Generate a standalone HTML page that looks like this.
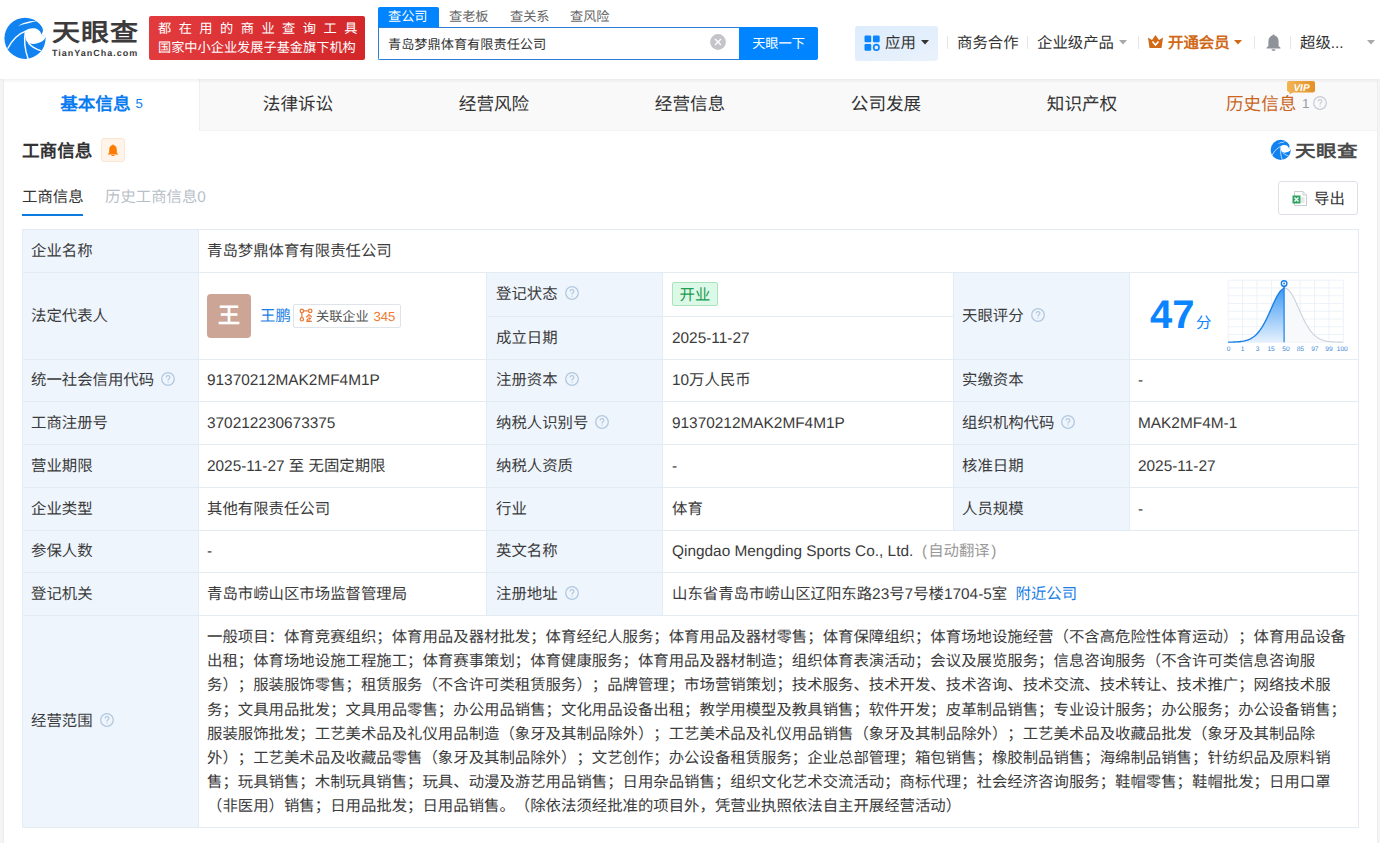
<!DOCTYPE html>
<html lang="zh-CN"><head><meta charset="utf-8">
<style>
*{margin:0;padding:0;box-sizing:border-box}
html,body{text-rendering:geometricPrecision;width:1380px;height:843px;overflow:hidden;background:#f4f4f4;font-family:"Liberation Sans",sans-serif;color:#333}
.a{position:absolute;white-space:nowrap}
#hdr{position:absolute;left:0;top:0;width:1380px;height:79px;background:#fff;box-shadow:0 1px 2px rgba(0,0,0,0.05)}
#card{position:absolute;left:4px;top:79px;width:1373px;height:770px;background:#fff;box-shadow:-1px 0 0 #ebebeb,1px 0 0 #eeeeee}
.tabs{position:absolute;left:0;top:0;width:1373px;height:52px;background:#f9f9f9;border-bottom:1px solid #f3f3f3}
.tab{position:absolute;top:0;width:196px;height:52px;line-height:50px;text-align:center;font-size:17.6px;color:#333}
.tab.on{background:#fff;color:#0a7cf0;font-weight:bold}
.cell{position:absolute;border-right:1px solid #e4ebf3;border-bottom:1px solid #e4ebf3;font-size:15.4px;color:#333;padding-left:10px;display:flex;align-items:center;white-space:nowrap}
.lb{background:#eef5fd}
.t{position:absolute;margin-top:1px;white-space:nowrap;font-size:15.4px;color:#3b3b3b;text-spacing-trim:space-all}
.q{display:inline-block;width:14px;height:14px;margin-left:7px;vertical-align:-1.4px}
</style></head><body>
<div id="hdr">
  <!-- logo -->
  <svg class="a" style="left:3px;top:16px" width="45" height="45" viewBox="0 0 45 45"><circle cx="22" cy="22.3" r="20.6" fill="#1183f0"/>
<path d="M33.1 5.1C37 7.2 39.8 10.5 39.9 14.2C40 16 39.4 17.3 38.4 18.3L42.8 21.1L46 21L46 -1L30 -1Z" fill="#fff"/>
<path d="M38.4 18.3C37 14 34 12.2 30 12.2C26.5 12.2 24 13.2 22.4 15C21.8 19 22 23.5 24.3 26.3C27 28.3 31 28.3 34.5 27.3C38.5 26.2 41.5 24.5 42.8 21.1Z" fill="#fff"/>
<path d="M15.3 9.9C19 7 25.5 4.9 33.6 5C27.5 6.9 21 8 15.3 9.9Z" fill="#fff"/>
<path d="M4.6 32.8C9 24 15.5 17.5 23.8 14.6" stroke="#fff" stroke-width="1.4" fill="none"/>
<path d="M22.4 15.5C20.8 24 21.8 34 25.3 43.5" stroke="#fff" stroke-width="1.4" fill="none"/>
<path d="M25.4 27C28.5 30.5 32.5 33.2 37.8 34.6" stroke="#fff" stroke-width="1.4" fill="none"/></svg>
  <div class="a" style="left:52px;top:18px;font-size:28px;line-height:34px;font-weight:bold;color:#3c3a3b;letter-spacing:1px;transform:scaleY(0.875);transform-origin:0 0">天眼查</div>
  <div class="a" style="left:52px;top:46px;font-size:9px;line-height:14px;font-weight:bold;color:#3c3a3b;letter-spacing:1px">TianYanCha.com</div>
  <!-- red badge -->
  <div class="a" style="left:149px;top:16px;width:216px;height:44px;border-radius:2px;background:linear-gradient(90deg,#e23b3e,#d3272a)"></div>
  <div class="a" style="left:158px;top:18px;font-size:13.2px;color:#fff;letter-spacing:7.5px;font-weight:500">都在用的商业查询工具</div>
  <div class="a" style="left:158px;top:37px;font-size:13.2px;color:#fff">国家中小企业发展子基金旗下机构</div>
  <!-- search -->
  <div class="a" style="left:378px;top:7px;width:61px;height:21px;background:#0084ff;border-radius:2px 2px 0 0"></div>
  <div class="a" style="left:388px;top:7px;font-size:13.2px;line-height:20px;color:#fff;font-weight:500">查公司</div>
  <div class="a" style="left:449px;top:7px;font-size:13.2px;line-height:20px;color:#666">查老板</div>
  <div class="a" style="left:510px;top:7px;font-size:13.2px;line-height:20px;color:#666">查关系</div>
  <div class="a" style="left:570px;top:7px;font-size:13.2px;line-height:20px;color:#666">查风险</div>
  <div class="a" style="left:378px;top:27px;width:362px;height:33px;border:1px solid #2b7fd4;border-right:none;border-radius:0 0 0 2px;background:#fff"></div>
  <div class="a" style="left:388px;top:35px;font-size:13.2px;line-height:20px;color:#333">青岛梦鼎体育有限责任公司</div>
  <svg class="a" style="left:710px;top:34px" width="16" height="16" viewBox="0 0 16 16"><circle cx="8" cy="8" r="7.9" fill="#c4c5ca"/><path d="M5 5L11 11M11 5L5 11" stroke="#fff" stroke-width="1.3"/></svg>
  <div class="a" style="left:739px;top:27px;width:79px;height:33px;background:#0084ff;border-radius:0 2px 2px 0;color:#fff;font-size:13.2px;line-height:34px;text-align:center">天眼一下</div>
  <!-- right nav -->
  <div class="a" style="left:855px;top:26px;width:83px;height:35px;background:linear-gradient(160deg,#ddecfc 0%,#e4effc 60%,#eaf2fc 100%);border-radius:3px"></div>
  <svg class="a" style="left:864px;top:35px" width="16.5" height="16.5" viewBox="0 0 16 16">
    <rect x="0.5" y="0.5" width="6.5" height="6.5" rx="1.2" fill="#0a84ff"/><rect x="8.7" y="0.5" width="6.5" height="6.5" rx="1.2" fill="#0a84ff"/><rect x="0.5" y="8.7" width="6.5" height="6.5" rx="1.2" fill="#0a84ff"/><circle cx="12" cy="12" r="2.6" fill="none" stroke="#0a84ff" stroke-width="1.6"/>
  </svg>
  <div class="a" style="left:885px;top:33px;font-size:15.4px;line-height:22px;color:#333">应用</div>
  <svg class="a" style="left:921px;top:40px" width="8" height="5" viewBox="0 0 8 5"><path d="M0 0H8L4 4.5Z" fill="#333"/></svg>
  <div class="a" style="left:947px;top:36px;width:1px;height:13px;background:#e6e6e6"></div>
  <div class="a" style="left:957px;top:33px;font-size:15.4px;line-height:22px;color:#333">商务合作</div>
  <div class="a" style="left:1027px;top:36px;width:1px;height:13px;background:#e6e6e6"></div>
  <div class="a" style="left:1037px;top:33px;font-size:15.4px;line-height:22px;color:#333">企业级产品</div>
  <svg class="a" style="left:1119px;top:40px" width="8" height="5" viewBox="0 0 8 5"><path d="M0 0H8L4 4.5Z" fill="#a8a8a8"/></svg>
  <div class="a" style="left:1138px;top:36px;width:1px;height:13px;background:#e6e6e6"></div>
  <svg class="a" style="left:1148px;top:35px" width="15" height="13" viewBox="0 0 15 13"><path d="M0 2.5L4 5L7.5 0L11 5L15 2.5L13.5 13H1.5Z" fill="#d06a18"/><path d="M4.5 6.5L7.5 10L10.5 6.5" stroke="#fff" stroke-width="1.6" fill="none"/></svg>
  <div class="a" style="left:1168px;top:33px;font-size:15.4px;line-height:22px;color:#d06a18;font-weight:bold">开通会员</div>
  <svg class="a" style="left:1234px;top:40px" width="8" height="5" viewBox="0 0 8 5"><path d="M0 0H8L4 4.5Z" fill="#d06a18"/></svg>
  <div class="a" style="left:1254px;top:36px;width:1px;height:13px;background:#e6e6e6"></div>
  <svg class="a" style="left:1266px;top:34px" width="15" height="17" viewBox="0 0 15 17"><path d="M7.5 0.5C8.3 0.5 8.6 1 8.6 1.6C11.3 2.2 12.6 4.6 12.6 7.5V12L14.5 13.8V14.4H0.5V13.8L2.4 12V7.5C2.4 4.6 3.7 2.2 6.4 1.6C6.4 1 6.7 0.5 7.5 0.5Z" fill="#8f9399"/><rect x="5.5" y="15.3" width="4" height="1.5" rx="0.7" fill="#8f9399"/></svg>
  <div class="a" style="left:1290px;top:36px;width:1px;height:13px;background:#e6e6e6"></div>
  <div class="a" style="left:1300px;top:33px;font-size:15.4px;line-height:22px;color:#333">超级...</div>
  <svg class="a" style="left:1367px;top:40px" width="8" height="5" viewBox="0 0 8 5"><path d="M0 0H8L4 4.5Z" fill="#a8a8a8"/></svg>
</div>

<div id="card">
  <div class="tabs">
    <div class="tab on" style="left:0;width:196px;border-right:1px solid #efefef">基本信息<span style="font-size:13.2px;font-weight:normal;margin-left:5px;vertical-align:2px">5</span></div>
    <div class="tab" style="left:196px">法律诉讼</div>
    <div class="tab" style="left:392px">经营风险</div>
    <div class="tab" style="left:588px">经营信息</div>
    <div class="tab" style="left:784px">公司发展</div>
    <div class="tab" style="left:980px">知识产权</div>
    <div class="a" style="left:1222px;top:0;height:52px;line-height:51px;font-size:17.6px;color:#c9651f">历史信息</div>
    <div class="a" style="left:1298px;top:0;height:52px;line-height:50px;font-size:13.2px;color:#959ba5">1</div>
    <svg class="a" style="left:1309px;top:17px" width="14" height="14" viewBox="0 0 14 14"><circle cx="7" cy="7" r="6.3" fill="none" stroke="#c3cbd6" stroke-width="1.2"/><path d="M5.1 5.4C5.1 4.3 5.9 3.6 7 3.6C8.1 3.6 8.9 4.3 8.9 5.3C8.9 6.5 7.4 6.7 7.1 7.7V8.4" fill="none" stroke="#c3cbd6" stroke-width="1.1"/><circle cx="7.1" cy="10.1" r="0.7" fill="#c3cbd6"/></svg>
  </div>
  <div class="a" style="left:0;top:0;width:1373px;height:4px;background:linear-gradient(rgba(0,0,0,0.055),rgba(0,0,0,0))"></div>
</div>

<svg class="a" style="left:1287px;top:81px" width="28" height="13" viewBox="0 0 28 13"><defs><linearGradient id="vg" x1="0" y1="0" x2="1" y2="0"><stop offset="0" stop-color="#f2b552"/><stop offset="1" stop-color="#e3902a"/></linearGradient></defs><path d="M2 0H26Q28 0 28 2V9.5Q28 11.5 26 11.5H6L2.5 13.5V11.3Q0 11 0 9V2Q0 0 2 0Z" fill="url(#vg)"/><text x="14.5" y="9.6" text-anchor="middle" font-family="Liberation Sans, sans-serif" font-size="10" font-weight="bold" font-style="italic" fill="#fff">VIP</text></svg>
<!-- section header (page coords) -->
<div class="a" style="left:22px;top:138px;font-size:17.6px;line-height:26px;font-weight:bold;color:#333">工商信息</div>
<div class="a" style="left:101px;top:138px;width:24px;height:24px;background:#fff4ea;border:1px solid #fbe5d3;border-radius:3px"></div>
<svg class="a" style="left:107px;top:144px" width="12" height="12" viewBox="0 0 12 12"><path d="M6 0.5C6.6 0.5 6.8 0.9 6.8 1.3C8.8 1.8 9.8 3.6 9.8 5.8V8.8L11.2 10.2V10.6H0.8V10.2L2.2 8.8V5.8C2.2 3.6 3.2 1.8 5.2 1.3C5.2 0.9 5.4 0.5 6 0.5Z" fill="#ff7b00"/><rect x="4.3" y="11" width="3.4" height="1" rx="0.5" fill="#ff7b00"/></svg>

<div class="a" style="left:22px;top:187px;font-size:15.4px;line-height:22px;color:#333">工商信息</div>
<div class="a" style="left:22px;top:214px;width:61px;height:2px;background:#0a7be0"></div>
<div class="a" style="left:105px;top:187px;font-size:15.4px;line-height:22px;color:#b9bfc9">历史工商信息0</div>

<div class="a" style="left:1278px;top:181px;width:80px;height:34px;border:1px solid #dcdfe6;border-radius:3px;background:#fff"></div>
<div class="a" style="left:1314px;top:189px;font-size:15.4px;line-height:22px;color:#333">导出</div>
<svg class="a" style="left:1292px;top:191px" width="16" height="15" viewBox="0 0 16 15"><path d="M2.5 0.5H11L14.5 4V14.5H2.5Z" fill="#fff" stroke="#c9ccd2" stroke-width="1"/><path d="M11 0.5V4H14.5" fill="none" stroke="#c9ccd2" stroke-width="1"/><path d="M9 7H12.5M9 9H12.5M9 11H12.5" stroke="#c9ccd2" stroke-width="0.9"/><rect x="0.5" y="4.5" width="8" height="8" fill="#2ea35f"/><path d="M2.5 6.5L6.5 10.5M6.5 6.5L2.5 10.5" stroke="#fff" stroke-width="1.3"/></svg>
<svg class="a" style="left:1270px;top:139px" width="22" height="22" viewBox="0 0 45 45"><circle cx="22" cy="22.3" r="20.6" fill="#1183f0"/><path d="M33.1 5.1C37 7.2 39.8 10.5 39.9 14.2C40 16 39.4 17.3 38.4 18.3L42.8 21.1L46 21L46 -1L30 -1Z" fill="#fff"/>
<path d="M38.4 18.3C37 14 34 12.2 30 12.2C26.5 12.2 24 13.2 22.4 15C21.8 19 22 23.5 24.3 26.3C27 28.3 31 28.3 34.5 27.3C38.5 26.2 41.5 24.5 42.8 21.1Z" fill="#fff"/>
<path d="M15.3 9.9C19 7 25.5 4.9 33.6 5C27.5 6.9 21 8 15.3 9.9Z" fill="#fff"/>
<path d="M4.6 32.8C9 24 15.5 17.5 23.8 14.6" stroke="#fff" stroke-width="1.4" fill="none"/>
<path d="M22.4 15.5C20.8 24 21.8 34 25.3 43.5" stroke="#fff" stroke-width="1.4" fill="none"/>
<path d="M25.4 27C28.5 30.5 32.5 33.2 37.8 34.6" stroke="#fff" stroke-width="1.4" fill="none"/></svg>
<div class="a" style="left:1295px;top:141px;font-size:20.5px;line-height:26px;font-weight:bold;color:#4a4a4a;letter-spacing:0.5px;transform:scaleY(0.82);transform-origin:0 0">天眼查</div>

<!-- table -->
<!--TABLE-->
<div class="a" style="left:22px;top:229px;width:1336px;height:598px;background:#fff"></div>
<div class="a" style="left:22px;top:229px;width:176px;height:598px;background:#eef5fd"></div>
<div class="a" style="left:486px;top:272px;width:176px;height:343px;background:#eef5fd"></div>
<div class="a" style="left:953px;top:272px;width:176px;height:258px;background:#eef5fd"></div>
<div class="a" style="left:22px;top:229px;width:1337px;height:1px;background:#e4ebf3"></div>
<div class="a" style="left:22px;top:272px;width:1337px;height:1px;background:#e4ebf3"></div>
<div class="a" style="left:22px;top:359px;width:1337px;height:1px;background:#e4ebf3"></div>
<div class="a" style="left:22px;top:401px;width:1337px;height:1px;background:#e4ebf3"></div>
<div class="a" style="left:22px;top:444px;width:1337px;height:1px;background:#e4ebf3"></div>
<div class="a" style="left:22px;top:487px;width:1337px;height:1px;background:#e4ebf3"></div>
<div class="a" style="left:22px;top:530px;width:1337px;height:1px;background:#e4ebf3"></div>
<div class="a" style="left:22px;top:572px;width:1337px;height:1px;background:#e4ebf3"></div>
<div class="a" style="left:22px;top:615px;width:1337px;height:1px;background:#e4ebf3"></div>
<div class="a" style="left:22px;top:827px;width:1337px;height:1px;background:#e4ebf3"></div>
<div class="a" style="left:486px;top:316px;width:468px;height:1px;background:#e4ebf3"></div>
<div class="a" style="left:22px;top:229px;width:1px;height:599px;background:#e4ebf3"></div>
<div class="a" style="left:1358px;top:229px;width:1px;height:599px;background:#e4ebf3"></div>
<div class="a" style="left:198px;top:229px;width:1px;height:599px;background:#e4ebf3"></div>
<div class="a" style="left:486px;top:272px;width:1px;height:344px;background:#e4ebf3"></div>
<div class="a" style="left:662px;top:272px;width:1px;height:344px;background:#e4ebf3"></div>
<div class="a" style="left:953px;top:272px;width:1px;height:259px;background:#e4ebf3"></div>
<div class="a" style="left:1129px;top:272px;width:1px;height:259px;background:#e4ebf3"></div>
<div class="t" style="left:31px;top:229px;height:43px;line-height:43px">企业名称</div>
<div class="t" style="left:207px;top:229px;height:43px;line-height:43px">青岛梦鼎体育有限责任公司</div>

<div class="t" style="left:31px;top:272px;height:87px;line-height:87px">法定代表人</div>
<div class="a" style="left:207px;top:294px;width:44px;height:44px;border-radius:4px;background:#cca597;color:#fff;font-size:22px;line-height:44px;text-align:center;font-weight:bold">王</div>
<div class="t" style="left:260px;top:304px;height:24px;line-height:24px;color:#1a7ee6">王鹏</div>
<div class="a" style="left:293px;top:304px;width:108px;height:24px;border:1px solid #dfe3ea;border-radius:2px"></div>
<svg class="a" style="left:296px;top:305px" width="20" height="20" viewBox="0 0 20 20"><g fill="none" stroke="#ec7a35" stroke-width="1.2"><circle cx="5.9" cy="5.9" r="1.7"/><circle cx="14.2" cy="5.9" r="1.7"/><circle cx="5.9" cy="14.3" r="1.7"/><path d="M7.6 5.9H12.5M5.9 7.6V12.6M10.3 12.2L13 9.6L15.7 12.2M13 11.5V16.2M11.3 13.5V16.2M10.2 16.3H15.8M13 13.6H15"/></g></svg>
<div class="t" style="left:316px;top:304px;height:24px;line-height:24px;font-size:13.2px;color:#555">关联企业 <span style="color:#ee7b30;margin-left:1px">345</span></div>

<div class="t" style="left:496px;top:272px;height:44px;line-height:44px">登记状态<svg class="q" viewBox="0 0 14 14"><circle cx="7" cy="7" r="6.3" fill="none" stroke="#b3c8de" stroke-width="1.3"/><path d="M5.1 5.4C5.1 4.3 5.9 3.6 7 3.6C8.1 3.6 8.9 4.3 8.9 5.3C8.9 6.5 7.4 6.7 7.1 7.7V8.4" fill="none" stroke="#b3c8de" stroke-width="1.2"/><circle cx="7.1" cy="10.1" r="0.7" fill="#b3c8de"/></svg></div>
<div class="a" style="left:672px;top:282px;width:46px;height:24px;border:1px solid #a9e2bd;background:#dcf8e6;border-radius:2px;color:#239c55;font-size:15.4px;line-height:25px;text-align:center">开业</div>
<div class="t" style="left:496px;top:316px;height:43px;line-height:43px">成立日期</div>
<div class="t" style="left:672px;top:316px;height:43px;line-height:43px">2025-11-27</div>

<div class="t" style="left:962px;top:272px;height:87px;line-height:87px">天眼评分<svg class="q" viewBox="0 0 14 14"><circle cx="7" cy="7" r="6.3" fill="none" stroke="#b3c8de" stroke-width="1.3"/><path d="M5.1 5.4C5.1 4.3 5.9 3.6 7 3.6C8.1 3.6 8.9 4.3 8.9 5.3C8.9 6.5 7.4 6.7 7.1 7.7V8.4" fill="none" stroke="#b3c8de" stroke-width="1.2"/><circle cx="7.1" cy="10.1" r="0.7" fill="#b3c8de"/></svg></div>
<div class="a" style="left:1150px;top:293px;font-size:40px;line-height:44px;font-weight:bold;color:#0a84ff">47</div>
<div class="a" style="left:1196px;top:313px;font-size:15.4px;line-height:22px;color:#0a84ff">分</div>
<!--CHART--><svg class="a" style="left:1222px;top:274px" width="128" height="80" viewBox="0 0 128 80">
<defs><linearGradient id="gf" x1="0" y1="0" x2="0" y2="1"><stop offset="0" stop-color="#3d9af5"/><stop offset="1" stop-color="#e6f1fd"/></linearGradient></defs>
<path d="M6.20 6.20V68.30" stroke="#edf2f8" stroke-width="1"/><path d="M20.59 6.20V68.30" stroke="#edf2f8" stroke-width="1"/><path d="M34.97 6.20V68.30" stroke="#edf2f8" stroke-width="1"/><path d="M49.36 6.20V68.30" stroke="#edf2f8" stroke-width="1"/><path d="M63.75 6.20V68.30" stroke="#edf2f8" stroke-width="1"/><path d="M78.14 6.20V68.30" stroke="#edf2f8" stroke-width="1"/><path d="M92.53 6.20V68.30" stroke="#edf2f8" stroke-width="1"/><path d="M106.91 6.20V68.30" stroke="#edf2f8" stroke-width="1"/><path d="M121.30 6.20V68.30" stroke="#edf2f8" stroke-width="1"/><path d="M6.20 6.20H121.30" stroke="#edf2f8" stroke-width="1"/><path d="M6.20 13.96H121.30" stroke="#edf2f8" stroke-width="1"/><path d="M6.20 21.73H121.30" stroke="#edf2f8" stroke-width="1"/><path d="M6.20 29.49H121.30" stroke="#edf2f8" stroke-width="1"/><path d="M6.20 37.25H121.30" stroke="#edf2f8" stroke-width="1"/><path d="M6.20 45.01H121.30" stroke="#edf2f8" stroke-width="1"/><path d="M6.20 52.77H121.30" stroke="#edf2f8" stroke-width="1"/><path d="M6.20 60.54H121.30" stroke="#edf2f8" stroke-width="1"/><path d="M6.20 68.30H121.30" stroke="#edf2f8" stroke-width="1"/>
<path d="M62.10 14.41 L63.28 14.31 L64.47 14.60 L65.65 15.26 L66.84 16.29 L68.02 17.65 L69.20 19.33 L70.39 21.27 L71.57 23.45 L72.76 25.80 L73.94 28.31 L75.12 30.90 L76.31 33.56 L77.49 36.23 L78.68 38.87 L79.86 41.47 L81.04 43.98 L82.23 46.39 L83.41 48.67 L84.60 50.82 L85.78 52.82 L86.96 54.67 L88.15 56.37 L89.33 57.91 L90.52 59.29 L91.70 60.54 L92.88 61.64 L94.07 62.61 L95.25 63.47 L96.44 64.21 L97.62 64.85 L98.80 65.41 L99.99 65.88 L101.17 66.28 L102.36 66.62 L103.54 66.90 L104.72 67.14 L105.91 67.34 L107.09 67.51 L108.28 67.64 L109.46 67.76 L110.64 67.85 L111.83 67.92 L113.01 67.99 L114.20 68.04 L115.38 68.08 L116.56 68.12 L117.75 68.14 L118.93 68.17 L120.12 68.19 L121.30 68.20 L121.30 68.30 L62.10 68.30 Z" fill="#f8f9fb"/>
<path d="M6.20 68.18 L7.60 68.16 L9.00 68.13 L10.39 68.09 L11.79 68.04 L13.19 67.98 L14.59 67.90 L15.98 67.80 L17.38 67.68 L18.78 67.52 L20.17 67.33 L21.57 67.09 L22.97 66.79 L24.37 66.42 L25.77 65.97 L27.16 65.42 L28.56 64.76 L29.96 63.97 L31.36 63.04 L32.75 61.95 L34.15 60.68 L35.55 59.22 L36.94 57.56 L38.34 55.68 L39.74 53.59 L41.14 51.29 L42.53 48.77 L43.93 46.07 L45.33 43.20 L46.73 40.19 L48.12 37.09 L49.52 33.94 L50.92 30.81 L52.32 27.75 L53.71 24.85 L55.11 22.16 L56.51 19.77 L57.91 17.75 L59.30 16.15 L60.70 15.02 L62.10 14.41 L62.10 68.30 L6.20 68.30 Z" fill="url(#gf)"/>
<path d="M62.10 14.41 L63.28 14.31 L64.47 14.60 L65.65 15.26 L66.84 16.29 L68.02 17.65 L69.20 19.33 L70.39 21.27 L71.57 23.45 L72.76 25.80 L73.94 28.31 L75.12 30.90 L76.31 33.56 L77.49 36.23 L78.68 38.87 L79.86 41.47 L81.04 43.98 L82.23 46.39 L83.41 48.67 L84.60 50.82 L85.78 52.82 L86.96 54.67 L88.15 56.37 L89.33 57.91 L90.52 59.29 L91.70 60.54 L92.88 61.64 L94.07 62.61 L95.25 63.47 L96.44 64.21 L97.62 64.85 L98.80 65.41 L99.99 65.88 L101.17 66.28 L102.36 66.62 L103.54 66.90 L104.72 67.14 L105.91 67.34 L107.09 67.51 L108.28 67.64 L109.46 67.76 L110.64 67.85 L111.83 67.92 L113.01 67.99 L114.20 68.04 L115.38 68.08 L116.56 68.12 L117.75 68.14 L118.93 68.17 L120.12 68.19 L121.30 68.20" fill="none" stroke="#cbd2dc" stroke-width="1.1"/>
<path d="M6.20 68.18 L7.60 68.16 L9.00 68.13 L10.39 68.09 L11.79 68.04 L13.19 67.98 L14.59 67.90 L15.98 67.80 L17.38 67.68 L18.78 67.52 L20.17 67.33 L21.57 67.09 L22.97 66.79 L24.37 66.42 L25.77 65.97 L27.16 65.42 L28.56 64.76 L29.96 63.97 L31.36 63.04 L32.75 61.95 L34.15 60.68 L35.55 59.22 L36.94 57.56 L38.34 55.68 L39.74 53.59 L41.14 51.29 L42.53 48.77 L43.93 46.07 L45.33 43.20 L46.73 40.19 L48.12 37.09 L49.52 33.94 L50.92 30.81 L52.32 27.75 L53.71 24.85 L55.11 22.16 L56.51 19.77 L57.91 17.75 L59.30 16.15 L60.70 15.02 L62.10 14.41" fill="none" stroke="#1a80e6" stroke-width="1.4"/>
<path d="M62.10 13.30V68.30" stroke="#1a80e6" stroke-width="1.2"/>
<path d="M59.90 11.30L62.10 14.50L64.30 11.30Z" fill="#1a80e6"/>
<circle cx="62.10" cy="9.50" r="2.8" fill="#fff" stroke="#1a80e6" stroke-width="1.4"/>
<circle cx="62.10" cy="9.50" r="0.9" fill="#1a80e6"/>
<g font-family="Liberation Sans, sans-serif" font-size="6.6" fill="#3d88da"><text x="6.5" y="76.6" text-anchor="middle">0</text><text x="20.7" y="76.6" text-anchor="middle">1</text><text x="35.6" y="76.6" text-anchor="middle">3</text><text x="49.1" y="76.6" text-anchor="middle">15</text><text x="64.0" y="76.6" text-anchor="middle">50</text><text x="78.3" y="76.6" text-anchor="middle">85</text><text x="92.8" y="76.6" text-anchor="middle">97</text><text x="107.0" y="76.6" text-anchor="middle">99</text><text x="120.3" y="76.6" text-anchor="middle">100</text></g>
</svg><!--/CHART-->

<div class="t" style="left:31px;top:359px;height:42px;line-height:42px">统一社会信用代码<svg class="q" viewBox="0 0 14 14"><circle cx="7" cy="7" r="6.3" fill="none" stroke="#b3c8de" stroke-width="1.3"/><path d="M5.1 5.4C5.1 4.3 5.9 3.6 7 3.6C8.1 3.6 8.9 4.3 8.9 5.3C8.9 6.5 7.4 6.7 7.1 7.7V8.4" fill="none" stroke="#b3c8de" stroke-width="1.2"/><circle cx="7.1" cy="10.1" r="0.7" fill="#b3c8de"/></svg></div>
<div class="t" style="left:207px;top:359px;height:42px;line-height:42px">91370212MAK2MF4M1P</div>
<div class="t" style="left:496px;top:359px;height:42px;line-height:42px">注册资本<svg class="q" viewBox="0 0 14 14"><circle cx="7" cy="7" r="6.3" fill="none" stroke="#b3c8de" stroke-width="1.3"/><path d="M5.1 5.4C5.1 4.3 5.9 3.6 7 3.6C8.1 3.6 8.9 4.3 8.9 5.3C8.9 6.5 7.4 6.7 7.1 7.7V8.4" fill="none" stroke="#b3c8de" stroke-width="1.2"/><circle cx="7.1" cy="10.1" r="0.7" fill="#b3c8de"/></svg></div>
<div class="t" style="left:672px;top:359px;height:42px;line-height:42px">10万人民币</div>
<div class="t" style="left:962px;top:359px;height:42px;line-height:42px">实缴资本</div>
<div class="t" style="left:1138px;top:359px;height:42px;line-height:42px">-</div>

<div class="t" style="left:31px;top:401px;height:43px;line-height:43px">工商注册号</div>
<div class="t" style="left:207px;top:401px;height:43px;line-height:43px">370212230673375</div>
<div class="t" style="left:496px;top:401px;height:43px;line-height:43px">纳税人识别号<svg class="q" viewBox="0 0 14 14"><circle cx="7" cy="7" r="6.3" fill="none" stroke="#b3c8de" stroke-width="1.3"/><path d="M5.1 5.4C5.1 4.3 5.9 3.6 7 3.6C8.1 3.6 8.9 4.3 8.9 5.3C8.9 6.5 7.4 6.7 7.1 7.7V8.4" fill="none" stroke="#b3c8de" stroke-width="1.2"/><circle cx="7.1" cy="10.1" r="0.7" fill="#b3c8de"/></svg></div>
<div class="t" style="left:672px;top:401px;height:43px;line-height:43px">91370212MAK2MF4M1P</div>
<div class="t" style="left:962px;top:401px;height:43px;line-height:43px">组织机构代码<svg class="q" viewBox="0 0 14 14"><circle cx="7" cy="7" r="6.3" fill="none" stroke="#b3c8de" stroke-width="1.3"/><path d="M5.1 5.4C5.1 4.3 5.9 3.6 7 3.6C8.1 3.6 8.9 4.3 8.9 5.3C8.9 6.5 7.4 6.7 7.1 7.7V8.4" fill="none" stroke="#b3c8de" stroke-width="1.2"/><circle cx="7.1" cy="10.1" r="0.7" fill="#b3c8de"/></svg></div>
<div class="t" style="left:1138px;top:401px;height:43px;line-height:43px">MAK2MF4M-1</div>

<div class="t" style="left:31px;top:444px;height:43px;line-height:43px">营业期限</div>
<div class="t" style="left:207px;top:444px;height:43px;line-height:43px">2025-11-27 至 无固定期限</div>
<div class="t" style="left:496px;top:444px;height:43px;line-height:43px">纳税人资质</div>
<div class="t" style="left:672px;top:444px;height:43px;line-height:43px">-</div>
<div class="t" style="left:962px;top:444px;height:43px;line-height:43px">核准日期</div>
<div class="t" style="left:1138px;top:444px;height:43px;line-height:43px">2025-11-27</div>

<div class="t" style="left:31px;top:487px;height:43px;line-height:43px">企业类型</div>
<div class="t" style="left:207px;top:487px;height:43px;line-height:43px">其他有限责任公司</div>
<div class="t" style="left:496px;top:487px;height:43px;line-height:43px">行业</div>
<div class="t" style="left:672px;top:487px;height:43px;line-height:43px">体育</div>
<div class="t" style="left:962px;top:487px;height:43px;line-height:43px">人员规模</div>
<div class="t" style="left:1138px;top:487px;height:43px;line-height:43px">-</div>

<div class="t" style="left:31px;top:530px;height:42px;line-height:42px">参保人数</div>
<div class="t" style="left:207px;top:530px;height:42px;line-height:42px">-</div>
<div class="t" style="left:496px;top:530px;height:42px;line-height:42px">英文名称</div>
<div class="t" style="left:672px;top:530px;height:42px;line-height:42px">Qingdao Mengding Sports Co., Ltd. <span style="color:#999;margin-left:4.4px">(<span style="margin-left:1.1px;margin-right:1.5px">自动翻译</span>)</span></div>

<div class="t" style="left:31px;top:572px;height:43px;line-height:43px">登记机关</div>
<div class="t" style="left:207px;top:572px;height:43px;line-height:43px">青岛市崂山区市场监督管理局</div>
<div class="t" style="left:496px;top:572px;height:43px;line-height:43px">注册地址<svg class="q" viewBox="0 0 14 14"><circle cx="7" cy="7" r="6.3" fill="none" stroke="#b3c8de" stroke-width="1.3"/><path d="M5.1 5.4C5.1 4.3 5.9 3.6 7 3.6C8.1 3.6 8.9 4.3 8.9 5.3C8.9 6.5 7.4 6.7 7.1 7.7V8.4" fill="none" stroke="#b3c8de" stroke-width="1.2"/><circle cx="7.1" cy="10.1" r="0.7" fill="#b3c8de"/></svg></div>
<div class="t" style="left:672px;top:572px;height:43px;line-height:43px">山东省青岛市崂山区辽阳东路23号7号楼1704-5室 <span style="color:#1a7ee6;margin-left:4px">附近公司</span></div>

<div class="t" style="left:31px;top:615px;height:212px;line-height:212px">经营范围<svg class="q" viewBox="0 0 14 14"><circle cx="7" cy="7" r="6.3" fill="none" stroke="#b3c8de" stroke-width="1.3"/><path d="M5.1 5.4C5.1 4.3 5.9 3.6 7 3.6C8.1 3.6 8.9 4.3 8.9 5.3C8.9 6.5 7.4 6.7 7.1 7.7V8.4" fill="none" stroke="#b3c8de" stroke-width="1.2"/><circle cx="7.1" cy="10.1" r="0.7" fill="#b3c8de"/></svg></div>
<div class="t" style="left:207px;top:625px;line-height:24.2px">一般项目：体育竞赛组织；体育用品及器材批发；体育经纪人服务；体育用品及器材零售；体育保障组织；体育场地设施经营（不含高危险性体育运动）；体育用品设备<br>出租；体育场地设施工程施工；体育赛事策划；体育健康服务；体育用品及器材制造；组织体育表演活动；会议及展览服务；信息咨询服务（不含许可类信息咨询服<br>务）；服装服饰零售；租赁服务（不含许可类租赁服务）；品牌管理；市场营销策划；技术服务、技术开发、技术咨询、技术交流、技术转让、技术推广；网络技术服<br>务；文具用品批发；文具用品零售；办公用品销售；文化用品设备出租；教学用模型及教具销售；软件开发；皮革制品销售；专业设计服务；办公服务；办公设备销售；<br>服装服饰批发；工艺美术品及礼仪用品制造（象牙及其制品除外）；工艺美术品及礼仪用品销售（象牙及其制品除外）；工艺美术品及收藏品批发（象牙及其制品除<br>外）；工艺美术品及收藏品零售（象牙及其制品除外）；文艺创作；办公设备租赁服务；企业总部管理；箱包销售；橡胶制品销售；海绵制品销售；针纺织品及原料销<br>售；玩具销售；木制玩具销售；玩具、动漫及游艺用品销售；日用杂品销售；组织文化艺术交流活动；商标代理；社会经济咨询服务；鞋帽零售；鞋帽批发；日用口罩<br>（非医用）销售；日用品批发；日用品销售。（除依法须经批准的项目外，凭营业执照依法自主开展经营活动）</div>

<!--/TABLE-->

</body></html>
